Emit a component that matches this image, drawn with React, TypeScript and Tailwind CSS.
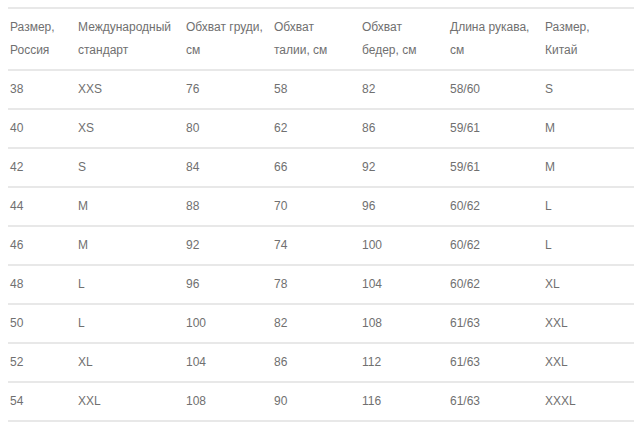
const headers = [
  ["Размер,", "Россия"],
  ["Международный", "стандарт"],
  ["Обхват груди,", "см"],
  ["Обхват", "талии, см"],
  ["Обхват", "бедер, см"],
  ["Длина рукава,", "см"],
  ["Размер,", "Китай"],
];

const rows = [
  ["38", "XXS", "76", "58", "82", "58/60", "S"],
  ["40", "XS", "80", "62", "86", "59/61", "M"],
  ["42", "S", "84", "66", "92", "59/61", "M"],
  ["44", "M", "88", "70", "96", "60/62", "L"],
  ["46", "M", "92", "74", "100", "60/62", "L"],
  ["48", "L", "96", "78", "104", "60/62", "XL"],
  ["50", "L", "100", "82", "108", "61/63", "XXL"],
  ["52", "XL", "104", "86", "112", "61/63", "XXL"],
  ["54", "XXL", "108", "90", "116", "61/63", "XXXL"],
];

const widths = ["w-[68px]", "w-[108px]", "w-[88px]", "w-[88px]", "w-[88px]", "w-[95px]", "w-[91px]"];

export default function App() {
  return (
    <div className="w-[640px] h-[430px] bg-white pt-[7px] pl-[8px] font-['Liberation_Sans',Arial,sans-serif] text-[12px] text-[#707070]">
      <table className="w-[626px] table-fixed border-collapse">
        <colgroup>
          {widths.map((w, i) => (
            <col key={i} className={w} />
          ))}
        </colgroup>
        <thead>
          <tr className="border-y-2 border-[#e8e8e8]">
            {headers.map((h, i) => (
              <th key={i} className="text-left font-normal pl-[2px] py-[7px] leading-[23px] align-top">
                {h[0]}
                <br />
                {h[1]}
              </th>
            ))}
          </tr>
        </thead>
        <tbody>
          {rows.map((r, i) => (
            <tr key={i} className="border-b-2 border-[#e8e8e8]">
              {r.map((c, j) => (
                <td key={j} className="pl-[2px] h-[39px] leading-[23px]">
                  {c}
                </td>
              ))}
            </tr>
          ))}
        </tbody>
      </table>
    </div>
  );
}
